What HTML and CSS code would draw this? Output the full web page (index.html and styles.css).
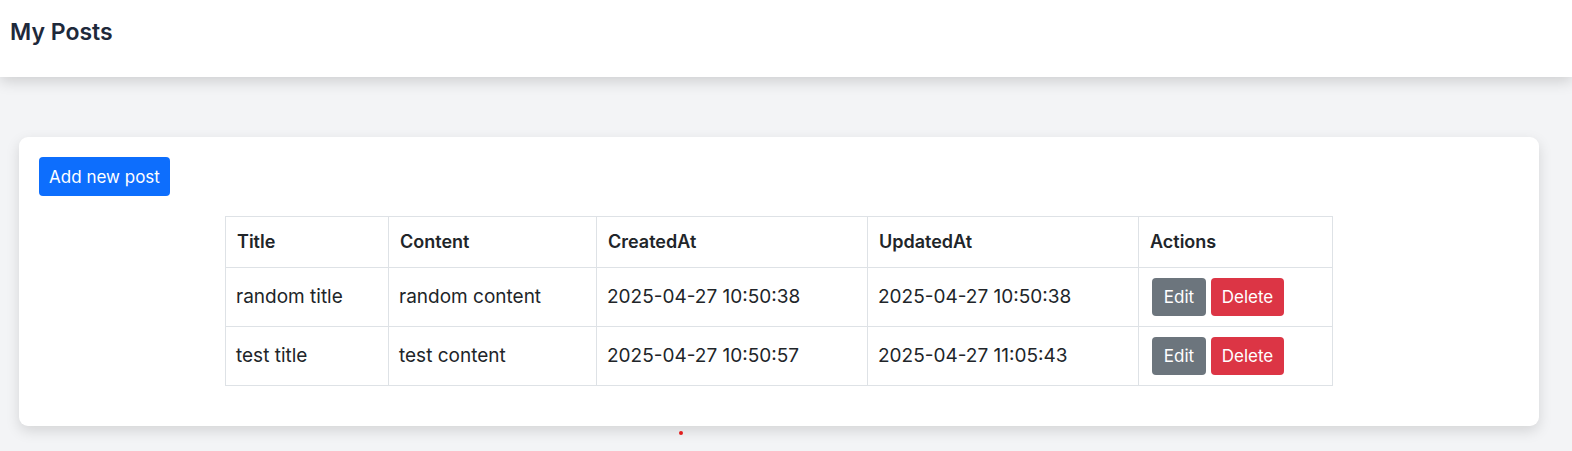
FILE: index.html
```html
<!DOCTYPE html>
<html lang="en">
<head>
<meta charset="utf-8">
<title>My Posts</title>
<link rel="stylesheet" href="styles.css">
</head>
<body>
<header class="topbar">
  <h1 class="page-title">My Posts</h1>
</header>
<main class="main">
  <section class="card">
    <button class="btn btn-primary">Add new post</button>
    <table class="posts">
      <colgroup>
        <col class="c-title">
        <col class="c-content">
        <col class="c-date">
        <col class="c-date">
        <col class="c-actions">
      </colgroup>
      <thead>
        <tr>
          <th>Title</th>
          <th>Content</th>
          <th>CreatedAt</th>
          <th>UpdatedAt</th>
          <th>Actions</th>
        </tr>
      </thead>
      <tbody>
        <tr>
          <td>random title</td>
          <td>random content</td>
          <td>2025-04-27 10:50:38</td>
          <td>2025-04-27 10:50:38</td>
          <td><div class="actions"><button class="btn btn-secondary">Edit</button><button class="btn btn-danger">Delete</button></div></td>
        </tr>
        <tr>
          <td>test title</td>
          <td>test content</td>
          <td>2025-04-27 10:50:57</td>
          <td>2025-04-27 11:05:43</td>
          <td><div class="actions"><button class="btn btn-secondary">Edit</button><button class="btn btn-danger">Delete</button></div></td>
        </tr>
      </tbody>
    </table>
  </section>
  <span class="dot"></span>
</main>
</body>
</html>
```
FILE: styles.css
```css
* { box-sizing: border-box; }
html, body {
  margin: 0;
  padding: 0;
}
body {
  background: #f3f4f6;
  font-family: "Inter", "Lato", sans-serif;
  font-size: 19px;
  color: #212529;
  min-height: 451px;
  position: relative;
}
.topbar {
  background: #ffffff;
  height: 77px;
  padding: 0 10px;
  display: flex;
  align-items: center;
  box-shadow: 0 4px 14px rgba(0, 0, 0, 0.16);
  position: relative;
  z-index: 1;
}
.page-title {
  margin: 0 0 13px 0;
  font-size: 23px;
  font-weight: 600;
  color: #1e293b;
  line-height: 28px;
}
.main {
  padding: 60px 33px 26px 19px;
}
.card {
  background: #ffffff;
  border-radius: 9px;
  padding: 20px 20px 40px 20px;
  box-shadow: 0 5px 14px rgba(0, 0, 0, 0.13);
}
.btn {
  font-family: inherit;
  font-size: 17px;
  line-height: 24px;
  border: 1px solid transparent;
  border-radius: 4px;
  color: #ffffff;
  padding: 6px 11px;
  cursor: pointer;
  height: 38px;
}
.btn-primary {
  background: #0d6efd;
  height: 39px;
  width: 131px;
  padding: 6px 0;
  display: block;
}
.btn-secondary {
  background: #6c757d;
  width: 54px;
  padding: 6px 0;
}
.btn-danger {
  background: #dc3545;
  width: 73px;
  padding: 6px 0;
}
.posts {
  margin: 20px auto 0 auto;
  border-collapse: collapse;
  table-layout: fixed;
  width: 1107px;
}
.c-title { width: 163px; }
.c-content { width: 208px; }
.c-date { width: 271px; }
.c-actions { width: 194px; }
.posts th,
.posts td {
  border: 1px solid #dee2e6;
  text-align: left;
  vertical-align: middle;
  padding: 10px 10px;
  line-height: 24px;
}
.posts th {
  font-size: 18px;
  font-weight: 600;
  padding: 13px 11px;
}
.posts td {
  height: 59px;
}
.posts tbody tr:last-child td {
  height: 58px;
}
.actions {
  display: flex;
  gap: 5px;
  padding-left: 3px;
}
.dot {
  position: absolute;
  left: 679px;
  top: 431px;
  width: 4px;
  height: 4px;
  border-radius: 50%;
  background: #e11d1d;
}
```
